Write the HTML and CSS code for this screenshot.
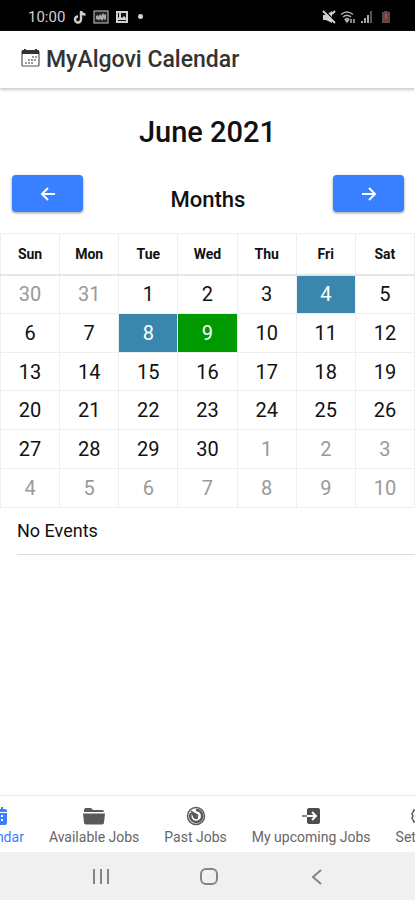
FILE: index.html
```
<!DOCTYPE html>
<html lang="en">

<head>
    <meta charset="UTF-8">
    <meta name="viewport" content="width=device-width, initial-scale=1.0">
    <title>MyAlgovi Calendar</title>
    <link rel="stylesheet" href="styles.css">
</head>

<body>
    <div class="status">
        <span class="status__time">10:00</span>
        <svg class="status__icon" width="14" height="14" viewBox="0 0 14 14" fill="none" stroke="#d0d0d0" stroke-width="2.4">
            <path d="M8 1v8.500a3 3 0 1 1-3-3M8 1c.3 2.200 1.800 3.500 4.500 3.500" />
        </svg>
        <svg class="status__icon" width="16" height="14" viewBox="0 0 16 14">
            <rect x="1" y="1" width="14" height="12" fill="#222" stroke="#aaa" stroke-width="1.200" />
            <path d="M3 9V6l2-1v2l2-3 1 2 2-3 1 2 2-1v5l-2 1v-2L9 11 8 9l-2 1z" fill="#aaa" />
        </svg>
        <svg class="status__icon" width="14" height="14" viewBox="0 0 14 14">
            <path d="M1 1h12v12H1z" fill="#d0d0d0" />
            <path d="M3 3h1v4l-1 1zM6 3h5v5L9 6 7 8 6 7zM3 10h8v1H3z" fill="#111" />
        </svg>
        <span class="status__dot"></span>
        <div class="status__right">
            <svg width="14" height="14" viewBox="0 0 14 14">
                <path d="M1 5h3l6-4v12L4 10H1z" fill="#d0d0d0" />
                <path d="M3 1l11 11" stroke="#000" stroke-width="1.500" />
                <path d="M1 1l12 12M10 4l3-3" stroke="#d0d0d0" stroke-width="2" />
            </svg>
            <svg width="16" height="14" viewBox="0 0 16 14" fill="none" stroke="#b0b0b0" stroke-width="1.500">
                <path d="M1 4.500q6-5 12 0M3 7q4-3.500 8 0M5 9.500q2-2 4 0" />
                <path d="M7 12l-1.500-2h3zM11 9v4M14 9v4" />
            </svg>
            <svg width="13" height="14" viewBox="0 0 13 14" stroke-width="2">
                <path d="M2 11v2M5 8v5M8 5v8" stroke="#aaa" />
                <path d="M11 1v12" stroke="#555" />
            </svg>
            <svg class="status__battery" width="10" height="14" viewBox="0 0 10 14">
                <path d="M1 2h2V1h4v1h2v11H1z" fill="#5c4848" />
                <path d="M4 4h2v5H4z" fill="#b34a4a" />
            </svg>
        </div>
    </div>

    <header class="header">
        <svg class="header__icon" width="19" height="18" viewBox="0 0 19 18">
            <rect x="1" y="2" width="17" height="15" rx="1" fill="none" stroke="#555" stroke-width="1.200" />
            <path d="M1 1h17v4H1zM3 0h2v2H3zM14 0h2v2h-2z" fill="#333" />
            <path d="M11 8h5M7 11h9M4 14h9" stroke="#777" stroke-width="1.500" stroke-dasharray="2 1" />
        </svg>
        <h1 class="header__title">MyAlgovi Calendar</h1>
    </header>

    <main class="main">
        <h2 class="month">June 2021</h2>
        <div class="switcher">
            <button class="switcher__button" aria-label="Previous month">
                <svg width="16" height="14" viewBox="0 0 16 14" fill="none" stroke="#fff" stroke-width="2">
                    <path d="M15 7H2M8 1L2 7l6 6" />
                </svg>
            </button>
            <h3 class="switcher__label">Months</h3>
            <button class="switcher__button" aria-label="Next month">
                <svg width="16" height="14" viewBox="0 0 16 14" fill="none" stroke="#fff" stroke-width="2">
                    <path d="M1 7h13M8 1l6 6-6 6" />
                </svg>
            </button>
        </div>

        <table class="calendar">
            <thead>
                <tr>
                    <th>Sun</th>
                    <th>Mon</th>
                    <th>Tue</th>
                    <th>Wed</th>
                    <th>Thu</th>
                    <th>Fri</th>
                    <th>Sat</th>
                </tr>
            </thead>
            <tbody>
                <tr>
                    <td class="muted">30</td>
                    <td class="muted">31</td>
                    <td>1</td>
                    <td>2</td>
                    <td>3</td>
                    <td class="event">4</td>
                    <td>5</td>
                </tr>
                <tr>
                    <td>6</td>
                    <td>7</td>
                    <td class="event">8</td>
                    <td class="selected">9</td>
                    <td>10</td>
                    <td>11</td>
                    <td>12</td>
                </tr>
                <tr>
                    <td>13</td>
                    <td>14</td>
                    <td>15</td>
                    <td>16</td>
                    <td>17</td>
                    <td>18</td>
                    <td>19</td>
                </tr>
                <tr>
                    <td>20</td>
                    <td>21</td>
                    <td>22</td>
                    <td>23</td>
                    <td>24</td>
                    <td>25</td>
                    <td>26</td>
                </tr>
                <tr>
                    <td>27</td>
                    <td>28</td>
                    <td>29</td>
                    <td>30</td>
                    <td class="muted">1</td>
                    <td class="muted">2</td>
                    <td class="muted">3</td>
                </tr>
                <tr>
                    <td class="muted">4</td>
                    <td class="muted">5</td>
                    <td class="muted">6</td>
                    <td class="muted">7</td>
                    <td class="muted">8</td>
                    <td class="muted">9</td>
                    <td class="muted">10</td>
                </tr>
            </tbody>
        </table>
        <p class="events">No Events</p>
    </main>

    <nav class="tabs">
        <a class="tabs__item tabs__item--active" href="#calendar">
            <svg width="22" height="20" viewBox="0 0 22 20">
                <path d="M4 1h2v2h10V1h2v2h2q2 0 2 2v12q0 2-2 2H2q-2 0-2-2V5q0-2 2-2h2z" fill="#3880ff" />
                <path d="M0 6.500h22" stroke="#fff" />
                <path d="M4 10h15M4 14h15" stroke="#fff" stroke-width="2" stroke-dasharray="2 2" />
            </svg>
            Calendar
        </a>
        <a class="tabs__item" href="#available">
            <svg width="22" height="20" viewBox="0 0 22 20" fill="#595959">
                <path d="M1 6V4q0-2 2-2h5l2 2h9q2 0 2 2zM0 7.500h22l-1 9q0 2-2 2H3q-2 0-2-2z" />
            </svg>
            Available Jobs
        </a>
        <a class="tabs__item" href="#past">
            <svg width="20" height="20" viewBox="0 0 20 20" fill="none" stroke="#595959">
                <circle cx="10" cy="10" r="8.500" stroke-width="1.500" />
                <path d="M10 4a6 6 0 1 1-5 3" stroke-width="2.500" />
                <path d="M5 5l7 4-1 4-3-1z" fill="#595959" />
            </svg>
            Past Jobs
        </a>
        <a class="tabs__item" href="#upcoming">
            <svg width="20" height="20" viewBox="0 0 20 20">
                <path d="M8 2h9q2 0 2 2v12q0 2-2 2H8q-2 0-2-2V4q0-2 2-2z" fill="#4d4d4d" />
                <path d="M6 10h9M11 6l4 4-4 4" fill="none" stroke="#fff" stroke-width="2" />
                <path d="M1 10h5" stroke="#888" stroke-width="2" />
            </svg>
            My upcoming Jobs
        </a>
        <a class="tabs__item" href="#settings">
            <svg width="20" height="20" viewBox="0 0 20 20" fill="none" stroke="#595959">
                <path d="M8 2h4l1 2 2 1 2-1 2 4-1 2 1 2-2 4-2-1-2 1-1 2H8l-1-2-2-1-2 1-2-4 1-2-1-2 2-4 2 1 2-1z" stroke-width="1.500" />
                <circle cx="10" cy="10" r="3" stroke-width="1.500" />
            </svg>
            Settings
        </a>
    </nav>

    <div class="system">
        <button class="system__button" aria-label="Recent apps">
            <svg width="20" height="20" viewBox="0 0 20 20" stroke="#858585" stroke-width="2">
                <path d="M3 3v15M10 3v15M17 3v15" />
            </svg>
        </button>
        <button class="system__button" aria-label="Home">
            <svg width="20" height="20" viewBox="0 0 20 20">
                <rect x="2" y="3" width="16" height="15" rx="5" fill="none" stroke="#858585" stroke-width="2" />
            </svg>
        </button>
        <button class="system__button" aria-label="Back">
            <svg width="20" height="20" viewBox="0 0 20 20" fill="none" stroke="#858585" stroke-width="2">
                <path d="M14 4l-8 7 8 7" />
            </svg>
        </button>
    </div>
</body>

</html>
```
FILE: styles.css
```
* {
    margin: 0;
    padding: 0;
    box-sizing: border-box;
}

body {
    display: flex;
    flex-direction: column;
    min-height: 100vh;
    font-family: Roboto, sans-serif;
    color: #111;
    background: #fff;
    overflow-x: hidden;
}

svg {
    display: block;
    flex-shrink: 0;
}

.status {
    display: flex;
    align-items: center;
    gap: 5px;
    height: 31px;
    padding: 2px 24px 0 28px;
    background: #000;
    color: #d0d0d0;
}

.status__time {
    margin-right: 3px;
    font-size: 15px;
}

.status__icon {
    margin-right: 1px;
}

.status__dot {
    width: 5px;
    height: 5px;
    border-radius: 50%;
    margin-left: 3px;
    background: #d0d0d0;
}

.status__right {
    display: flex;
    gap: 4px;
    margin-left: auto;
}

.status__battery {
    margin-left: 4px;
}

.header {
    display: flex;
    align-items: center;
    gap: 6px;
    height: 57px;
    padding: 0 21px;
    color: #333;
    box-shadow: 0 2px 3px #ccc;
}

.header__icon {
    margin-bottom: 4px;
}

.header__title {
    font-size: 23px;
    font-weight: 500;
}

.main {
    flex: 1;
}

.month {
    margin-top: 28px;
    font-size: 29px;
    line-height: 32px;
    font-weight: 500;
    text-align: center;
}

.switcher {
    display: flex;
    justify-content: space-between;
    padding: 27px 11px 20px 12px;
}

.switcher__button {
    display: flex;
    align-items: center;
    justify-content: center;
    width: 71px;
    height: 37px;
    border: none;
    border-radius: 4px;
    background: #3880ff;
    box-shadow: 0 1px 3px #999;
    cursor: pointer;
}

.switcher__label {
    padding-top: 12px;
    font-size: 22px;
    line-height: 26px;
    font-weight: 500;
}

.calendar {
    width: 100%;
    height: 275px;
    table-layout: fixed;
    border-collapse: collapse;
    text-align: center;
}

.calendar th,
.calendar td {
    height: 38px;
    border: 1px solid #eee;
    font-size: 20px;
}

.calendar th {
    height: 41px;
    border-bottom: 2px solid #e6e6e6;
    font-size: 14px;
    font-weight: 700;
}

.calendar .muted {
    color: #999;
}

.calendar .event {
    background: #3a87ad;
    color: #fff;
}

.calendar .selected {
    background: #009900;
    color: #fff;
}

.events {
    margin-left: 17px;
    padding: 12px 0;
    border-bottom: 1px solid #ddd;
    font-size: 18px;
    line-height: 22px;
}

.tabs {
    display: flex;
    justify-content: center;
    gap: 25px;
    height: 57px;
    padding-top: 10px;
    border-top: 1px solid #e8e8e8;
    overflow: hidden;
}

.tabs__item {
    display: flex;
    flex-direction: column;
    flex-shrink: 0;
    align-items: center;
    gap: 2px;
    color: #666;
    font-size: 14px;
    line-height: 18px;
    text-decoration: none;
}

.tabs__item--active {
    color: #3880ff;
}

.system {
    display: flex;
    justify-content: center;
    gap: 88px;
    height: 48px;
    padding-left: 2px;
    background: #f0f0f0;
}

.system__button {
    display: flex;
    align-items: center;
    border: none;
    background: none;
}
```
